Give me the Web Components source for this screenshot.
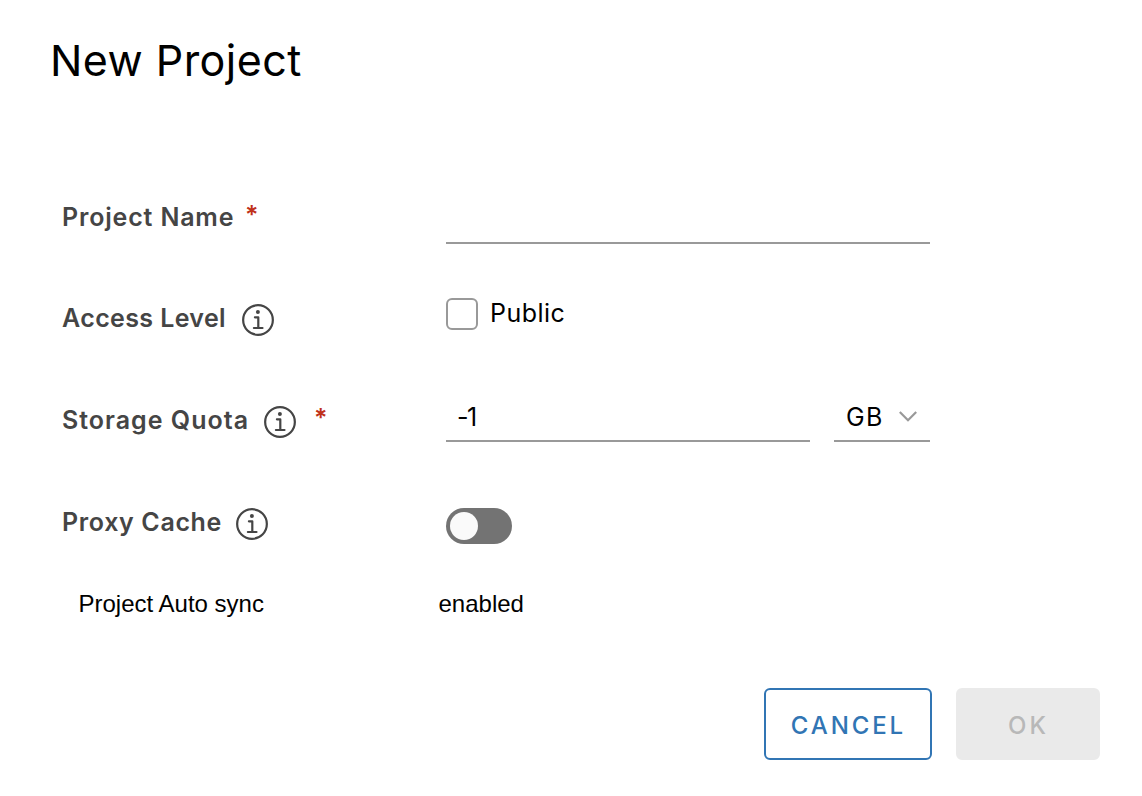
<!DOCTYPE html>
<html lang="en">
<head>
<meta charset="utf-8">
<title>New Project</title>
<style>
html,body{margin:0;background:#fff}
body{font-family:Inter,"Liberation Sans",sans-serif;color:#000;width:1142px;height:796px;overflow:hidden}
</style>
</head>
<body>
<project-dialog></project-dialog>
<script>
const define = (name, html) => customElements.define(name, class extends HTMLElement {
  constructor() {
    super();
    const t = document.createElement('template');
    t.innerHTML = html;
    this.attachShadow({mode: 'open'}).append(t.content.cloneNode(true));
  }
});

define('info-icon', `<style>:host{display:block;width:32px;height:32px;color:#454545}svg{display:block}</style>
<svg width="32" height="32" viewBox="0 0 32 32" fill="none" stroke="currentColor" stroke-width="2.2" stroke-linecap="round" stroke-linejoin="round"><circle cx="16" cy="16" r="14.85"/><circle cx="15.9" cy="7.9" r="2" fill="currentColor" stroke="none"/><path d="M12.9 13.3H16.3V24M11.9 24H20.5"/></svg>`);

define('required-mark', `<style>:host{display:block;font-weight:600;font-size:25px;line-height:32px;letter-spacing:0;color:#c0311a;width:10px;margin-top:-2px}span{display:block}</style><span>*</span>`);

define('form-row', `<style>
:host{display:grid;grid-template-columns:384px 1fr;height:102px;box-sizing:border-box}
.label{display:flex;align-items:flex-start;padding-top:35px;font-weight:600;font-size:25px;line-height:32px;color:#454545;white-space:nowrap}
.text{width:var(--w);letter-spacing:var(--ls,0)}
::slotted(info-icon){margin:2px 0 0 16px}
::slotted(required-mark){margin-left:var(--mark-gap,12px)}
</style><div class="label"><span class="text"><slot name="label"></slot></span><slot name="marks"></slot></div><slot></slot>`);

define('text-field', `<style>
:host{display:flex;align-items:center;box-sizing:border-box;height:50px;border-bottom:2px solid #999;padding:2px 12px 0 11px;font-size:25px;line-height:32px;white-space:nowrap;letter-spacing:-1.4px}
</style><slot></slot>`);

define('unit-select', `<style>
:host{display:flex;align-items:center;justify-content:space-between;box-sizing:border-box;width:96px;height:50px;border-bottom:2px solid #999;padding:2px 13px 0 12px;font-size:25px;line-height:32px}
span{letter-spacing:1.3px}svg{display:block;margin-top:-2px}
</style><span><slot></slot></span><svg width="18" height="11" viewBox="0 0 18 11" fill="none" stroke="#999" stroke-width="2.2"><path d="M.8 1L9 9.2L17.2 1"/></svg>`);

define('check-box', `<style>
:host{display:flex;gap:12px;margin-top:31px;height:32px;font-size:25px;line-height:31px}
i{box-sizing:border-box;width:32px;height:32px;border:2px solid #999;border-radius:6px}
span{letter-spacing:.45px}
</style><i></i><span><slot></slot></span>`);

define('toggle-switch', `<style>
:host{display:flex;align-items:center;box-sizing:border-box;width:66px;height:36px;border-radius:18px;background:#737373;padding-left:4px;margin-top:37px}
i{width:28px;height:28px;border-radius:50%;background:#fafafa}
</style><i></i>`);

define('action-button', `<style>
:host{display:flex;align-items:center;justify-content:center;box-sizing:border-box;width:168px;height:72px;border:2px solid #3175b4;border-radius:6px;color:#3175b4;font-size:24px;font-weight:500;line-height:32px;padding:4px 2px 0 0}
:host([disabled]){width:144px;border-color:#eaeaea;background:#eaeaea;color:#b8b8b8}
span{letter-spacing:2.9px;margin-right:-2.9px}
</style><span><slot></slot></span>`);

define('project-dialog', `<style>
:host{display:flex;flex-direction:column;height:796px;box-sizing:border-box;padding:30px 42px 36px 50px}
h1{margin:0 0 76px;font-size:43px;line-height:60px;font-weight:400;letter-spacing:.45px}
.form{padding-left:12px}
.name{width:484px;margin-top:28px}
.quota{display:flex;gap:24px;margin-top:23px}
.quota text-field{width:364px}
.first{height:101px}
.sync{display:grid;grid-template-columns:360px 1fr;padding-left:28.5px;margin-top:15px;font:24px/32px "Liberation Sans",Arial,sans-serif}
footer{display:flex;justify-content:flex-end;gap:24px;margin-top:auto}
</style>
<h1>New Project</h1>
<div class="form">
<form-row class="first" style="--w:171px;--ls:.83px"><span slot="label">Project Name</span><required-mark slot="marks"></required-mark><text-field class="name"></text-field></form-row>
<form-row style="--w:164px;--ls:.38px"><span slot="label">Access Level</span><info-icon slot="marks"></info-icon><check-box>Public</check-box></form-row>
<form-row style="--w:186px;--mark-gap:18px;--ls:1px"><span slot="label">Storage Quota</span><info-icon slot="marks"></info-icon><required-mark slot="marks"></required-mark><div class="quota"><text-field>-1</text-field><unit-select>GB</unit-select></div></form-row>
<form-row style="--w:158px;--ls:.65px"><span slot="label">Proxy Cache</span><info-icon slot="marks"></info-icon><toggle-switch></toggle-switch></form-row>
</div>
<div class="sync"><span>Project Auto sync</span><span>enabled</span></div>
<footer><action-button>CANCEL</action-button><action-button disabled>OK</action-button></footer>`);
</script>
</body>
</html>
